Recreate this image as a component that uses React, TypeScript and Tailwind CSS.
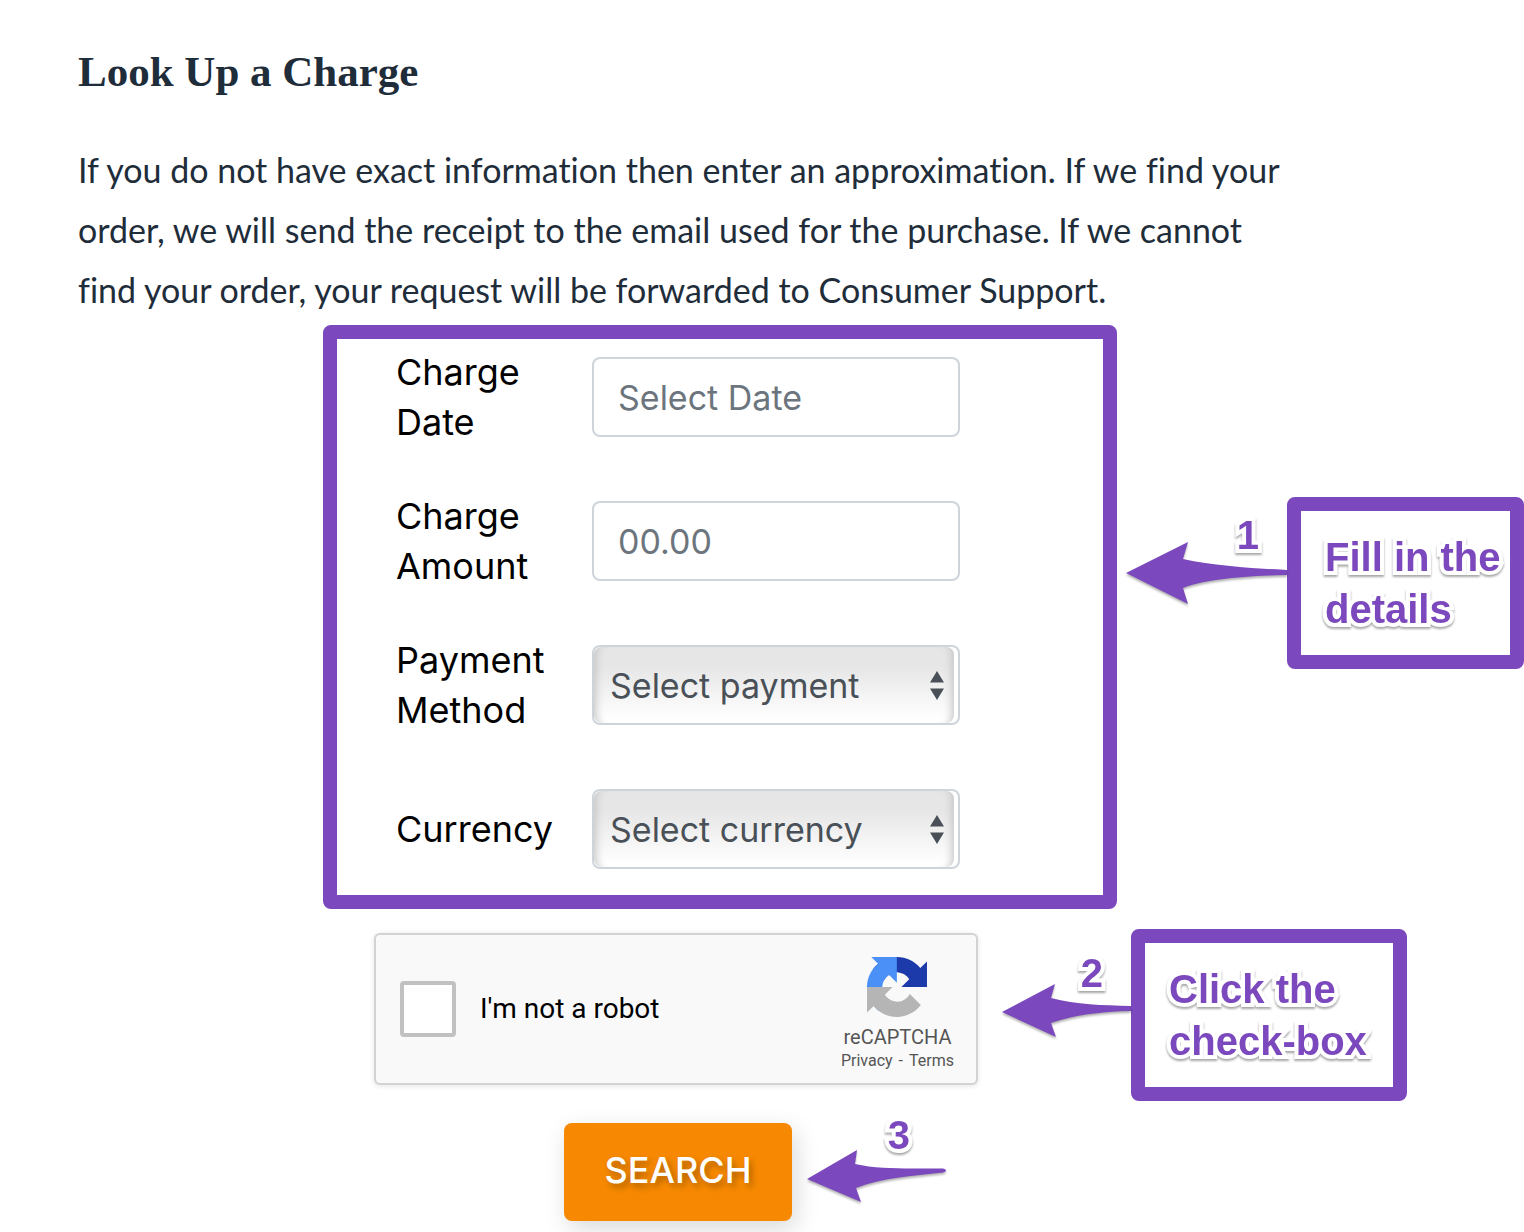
import type { ReactNode } from "react";

const ANNOTATION_TEXT =
  "font-['Liberation_Sans',sans-serif] text-[40px] leading-[52px] font-bold text-[#7b48bd] [-webkit-text-stroke:8px_white] [paint-order:stroke_fill] drop-shadow-[0_2px_1px_rgba(0,0,0,0.35)]";

const FIELD =
  "h-20 w-full rounded-lg border-2 border-[#ced4da] bg-white px-6 text-[34px] text-[#495057] placeholder:text-[#6c757d] outline-none";

function FieldRow({ id, label, children }: { id: string; label: string; children: ReactNode }) {
  return (
    <div className="grid min-h-[100px] grid-cols-[196px_1fr] items-center">
      <label htmlFor={id} className="pr-8 text-[36px] leading-[50px] text-black">
        {label}
      </label>
      {children}
    </div>
  );
}

function SelectField({ id, placeholder, options }: { id: string; placeholder: string; options: string[] }) {
  return (
    <div className="relative h-20 rounded-lg border-2 border-[#ced4da] bg-white pr-1">
      <select
        id={id}
        className="h-full w-full appearance-none rounded-lg bg-linear-to-b from-[#e6e6e6] from-25% to-white to-95% px-4 text-[34px] text-[#495057] shadow-[inset_10px_0_8px_-8px_#c4c4c4,inset_-10px_0_8px_-8px_#c4c4c4] outline-none"
      >
        <option>{placeholder}</option>
        {options.map((o) => (
          <option key={o}>{o}</option>
        ))}
      </select>
      <svg viewBox="0 0 14 29" className="pointer-events-none absolute top-6 right-3.5 h-[29px] w-3.5" fill="#495057">
        <path d="M7 0l7 11.5H0z" />
        <path d="M7 29l7-11.5H0z" />
      </svg>
    </div>
  );
}

function Callout({ children }: { children: ReactNode }) {
  return (
    <div className="shrink-0 rounded-lg border-[14px] border-[#7b48bd] bg-white py-5 pl-6">
      <p className={ANNOTATION_TEXT}>{children}</p>
    </div>
  );
}

function StepArrow({ path, size, viewBox }: { path: string; size: string; viewBox: string }) {
  return (
    <svg viewBox={viewBox} className={`${size} overflow-visible drop-shadow-[0_2px_1px_rgba(0,0,0,0.3)]`} fill="#7b48bd">
      <path d={path} />
    </svg>
  );
}

function RecaptchaLogo() {
  return (
    <svg viewBox="0 0 64 64" className="h-[60px] w-[60px]">
      <path
        fill="#1c3aa9"
        d="M64 31.955l-.033-1.37V4.687l-7.16 7.16C50.948 4.674 42.033.093 32.05.093c-10.4 0-19.622 4.96-25.458 12.64l11.736 11.86a15.55 15.55 0 0 1 4.754-5.334c2.05-1.6 4.952-2.906 8.968-2.906.485 0 .86.057 1.135.163 4.976.393 9.288 3.14 11.828 7.124l-8.307 8.307L64 31.953"
      />
      <path
        fill="#4a90f7"
        d="M31.862.094l-1.37.033H4.594l7.16 7.16C4.58 13.147 0 22.06 0 32.046c0 10.4 4.96 19.622 12.64 25.458L24.5 45.768a15.55 15.55 0 0 1-5.334-4.754c-1.6-2.05-2.906-4.952-2.906-8.968 0-.485.057-.86.163-1.135.393-4.976 3.14-9.288 7.124-11.828l8.307 8.307L31.86.095"
      />
      <path
        fill="#b5b5b5"
        d="M.001 32.045l.033 1.37v25.898l7.16-7.16c5.86 7.173 14.774 11.754 24.76 11.754 10.4 0 19.622-4.96 25.458-12.64l-11.736-11.86a15.55 15.55 0 0 1-4.754 5.334c-2.05 1.6-4.952 2.906-8.968 2.906-.485 0-.86-.057-1.135-.163-4.976-.393-9.288-3.14-11.828-7.124l8.307-8.307c-10.522.04-22.4.066-27.295-.005"
      />
    </svg>
  );
}

export default function App() {
  return (
    <main className="overflow-x-hidden bg-white pt-11 pb-3 font-[Inter,sans-serif]">
      <div className="pr-60 pl-[78px] text-[#1f2d3a]">
        <h1 className="font-['Liberation_Serif',serif] text-[43px] leading-[56px] font-bold">Look Up a Charge</h1>
        <p className="mt-10 font-[Lato,sans-serif] text-[34px] leading-[60px] [font-variant-ligatures:none]">
          If you do not have exact information then enter an approximation. If we find your order, we will send the
          receipt to the email used for the purchase. If we cannot find your order, your request will be forwarded to
          Consumer Support.
        </p>
      </div>

      <form onSubmit={(e) => e.preventDefault()}>
        <div className="mt-[5px] flex items-start pl-[323px]">
          <div className="grid flex-1 gap-11 rounded-lg border-[14px] border-[#7b48bd] pt-2 pr-[143px] pb-4 pl-[59px]">
            <FieldRow id="date" label="Charge Date">
              <input id="date" type="text" placeholder="Select Date" className={FIELD} />
            </FieldRow>
            <FieldRow id="amount" label="Charge Amount">
              <input id="amount" type="text" placeholder="00.00" className={FIELD} />
            </FieldRow>
            <FieldRow id="method" label="Payment Method">
              <SelectField id="method" placeholder="Select payment" options={["Credit card", "PayPal"]} />
            </FieldRow>
            <FieldRow id="currency" label="Currency">
              <SelectField id="currency" placeholder="Select currency" options={["USD", "EUR", "GBP"]} />
            </FieldRow>
          </div>
          <div className="mt-[172px] flex items-start">
            <div className="relative pt-11 pl-2">
              <StepArrow
                size="h-16 w-[162px]"
                viewBox="0 0 162 64"
                path="M1 32L63 1L58 18C90 25 125 27 162 29V34C125 35 85 37 58 47L63 63Z"
              />
              <span className={`absolute top-3 right-7 ${ANNOTATION_TEXT}`}>1</span>
            </div>
            <Callout>
              <span className="block w-[185px]">Fill in the details</span>
            </Callout>
          </div>
        </div>

        <div className="mt-5 flex items-start pl-[374px]">
          <div className="mt-1 flex h-[152px] w-[604px] items-center justify-between rounded-md border-2 border-[#d3d3d3] bg-[#f9f9f9] pr-[22px] pl-6 font-[Roboto,sans-serif] shadow-[0_1px_4px_1px_rgba(0,0,0,0.08)]">
            <label className="flex items-center gap-6 text-[28px] text-black">
              <input type="checkbox" className="h-14 w-14 appearance-none rounded-sm border-4 border-[#c1c1c1] bg-white" />
              I'm not a robot
            </label>
            <div className="flex flex-col items-center pt-3 text-[#555]">
              <RecaptchaLogo />
              <span className="mt-2 text-xl leading-6">reCAPTCHA</span>
              <div className="flex gap-1.5 text-base leading-6">
                <a href="#privacy">Privacy</a>
                <span>-</span>
                <a href="#terms">Terms</a>
              </div>
            </div>
          </div>
          <div className="relative pt-[54px] pl-6">
            <StepArrow
              size="h-[55px] w-[129px]"
              viewBox="0 0 129 55"
              path="M0 29L53 1L49 15C75 22 100 22 129 23V28C100 29 75 31 49 40L54 54Z"
            />
            <span className={`absolute top-[18px] right-7 ${ANNOTATION_TEXT}`}>2</span>
          </div>
          <Callout>
            <span className="block w-[224px]">Click the check-box</span>
          </Callout>
        </div>

        <div className="mt-[22px] flex items-start pl-[564px]">
          <button
            type="submit"
            className="h-[98px] w-[228px] rounded-lg bg-[#f78902] pb-1 text-[36px] font-medium text-white shadow-[4px_8px_24px_rgba(0,0,0,0.15)] text-shadow-[3px_4px_6px_rgba(0,0,0,0.3)]"
          >
            SEARCH
          </button>
          <div className="relative pt-[26px] pl-[15px]">
            <StepArrow
              size="h-[54px] w-[139px]"
              viewBox="0 0 139 54"
              path="M0 30L50 1L48 15C75 21 105 19 136 19.500Q139 20 139 21.500Q139 23 136 23.500C105 27 75 29 49 39L54 53Z"
            />
            <span className={`absolute -top-3.5 right-9 ${ANNOTATION_TEXT}`}>3</span>
          </div>
        </div>
      </form>
    </main>
  );
}
